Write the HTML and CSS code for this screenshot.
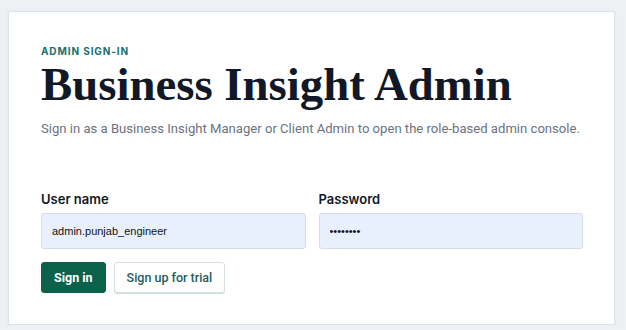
FILE: index.html
```html
<!DOCTYPE html>
<html>

<head>
    <meta charset="utf-8">
    <title>Business Insight Admin</title>
    <link rel="stylesheet" href="styles.css">
</head>

<body>
    <div class="login-card">
        <div class="eyebrow">Admin sign-in</div>
        <h1>Business Insight Admin</h1>
        <p class="lead">Sign in as a Business Insight Manager or Client Admin to open the role-based admin console.</p>

        <form class="login-form">
            <div class="fields">
                <div class="form-group">
                    <label for="username">User name</label>
                    <input type="text" id="username" value="admin.punjab_engineer">
                </div>
                <div class="form-group">
                    <label for="password">Password</label>
                    <input type="password" id="password" value="password">
                </div>
            </div>

            <div class="buttons">
                <button type="submit" class="submit-btn">Sign in</button>
                <button type="button" class="trial-btn">Sign up for trial</button>
            </div>
        </form>
    </div>
</body>

</html>
```

FILE: styles.css
```css
body {
    font-family: Inter, "Noto Sans", sans-serif;
    background-color: #eef0f3;
    margin: 0;
    padding: 11px 11px 0 8px;
}

.login-card {
    background-color: white;
    border: 1px solid #dde3ea;
    padding: 32px 31px 31px 32px;
    box-shadow: 0 1px 3px rgba(15, 23, 42, 0.06);
}

.eyebrow {
    font-size: 10px;
    font-weight: 700;
    letter-spacing: 0.09em;
    text-transform: uppercase;
    color: #16706d;
    line-height: 14px;
}

h1 {
    font-family: "Liberation Serif", serif;
    font-size: 46.8px;
    font-weight: 700;
    color: #111827;
    margin: 2px 0 0;
    line-height: 48px;
}

.lead {
    font-family: Roboto, sans-serif;
    font-size: 13.1px;
    color: #6b7280;
    margin: 12px 0 0;
    line-height: 18px;
}

.login-form {
    margin-top: 53px;
}

.fields {
    display: grid;
    grid-template-columns: 1fr 1fr;
    gap: 13px;
}

label {
    display: block;
    font-size: 13px;
    font-weight: 600;
    color: #111827;
    margin-bottom: 6px;
    line-height: 16px;
}

input {
    width: 100%;
    height: 36px;
    padding: 0 10px;
    border: 1px solid #d5dde7;
    border-radius: 3px;
    background-color: #e8f0fe;
    font-family: "Liberation Sans", Arial, sans-serif;
    font-size: 11px;
    color: #111;
    box-sizing: border-box;
}

input:focus {
    outline: none;
    border-color: #0b6149;
}

.buttons {
    display: flex;
    gap: 8px;
    margin-top: 13px;
}

button {
    height: 31px;
    border-radius: 3px;
    font-family: Roboto, sans-serif;
    font-size: 12.5px;
    cursor: pointer;
}

.submit-btn {
    padding: 0 12px;
    background-color: #0b6149;
    border: 1px solid #0b6149;
    color: white;
    font-weight: 700;
}

.trial-btn {
    padding: 0 12px;
    background-color: white;
    border: 1px solid #d6e0e2;
    box-shadow: 0 1px 0 #cfe0e0;
    color: #1f5c5c;
    font-weight: 500;
}
```
